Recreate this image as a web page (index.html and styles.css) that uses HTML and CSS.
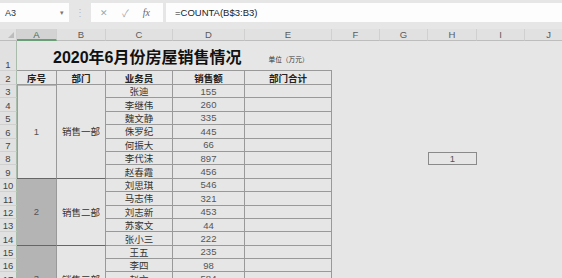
FILE: index.html
```html
<!DOCTYPE html>
<html lang="zh-CN">
<head>
    <meta charset="UTF-8">
    <title>2020年6月份房屋销售情况</title>
    <link rel="stylesheet" href="styles.css">
</head>
<body>

<div class="fbar">
    <div class="namebox"><span>A3</span><span class="arrow">&#9662;</span></div>
    <div class="dots">&#8942;</div>
    <div class="btns"><span class="x">&#10005;</span><span class="ok">&#10003;</span><span class="fx">fx</span></div>
    <div class="formula">=COUNTA(B$3:B3)</div>
</div>

<div class="sheet">
    <!-- column headers -->
    <div class="ch corner"><span class="tri"></span></div>
    <div class="ch on">A</div>
    <div class="ch">B</div>
    <div class="ch">C</div>
    <div class="ch">D</div>
    <div class="ch">E</div>
    <div class="ch">F</div>
    <div class="ch">G</div>
    <div class="ch">H</div>
    <div class="ch">I</div>
    <div class="ch">J</div>

    <!-- row 1 -->
    <div class="rh">1</div>
    <div class="title"><span class="big">2020年6月份房屋销售情况</span><span class="unit">单位（万元）</span></div>

    <!-- row 2 -->
    <div class="rh">2</div>
    <div class="c head">序号</div>
    <div class="c head">部门</div>
    <div class="c head">业务员</div>
    <div class="c head">销售额</div>
    <div class="c head">部门合计</div>

    <div class="rh">3</div>
    <div class="c m7 grp sel num">1</div>
    <div class="c m7 grp">销售一部</div>
    <div class="c">张迪</div>
    <div class="c num">155</div>
    <div class="c"></div>

    <div class="rh">4</div>
    <div class="c">李继伟</div>
    <div class="c num">260</div>
    <div class="c"></div>

    <div class="rh">5</div>
    <div class="c">魏文静</div>
    <div class="c num">335</div>
    <div class="c"></div>

    <div class="rh">6</div>
    <div class="c">侏罗纪</div>
    <div class="c num">445</div>
    <div class="c"></div>

    <div class="rh">7</div>
    <div class="c">何振大</div>
    <div class="c num">66</div>
    <div class="c"></div>

    <div class="rh">8</div>
    <div class="c">李代沫</div>
    <div class="c num">897</div>
    <div class="c"></div>

    <div class="rh">9</div>
    <div class="c">赵春霞</div>
    <div class="c num">456</div>
    <div class="c"></div>

    <div class="rh">10</div>
    <div class="c m5 grp dark num">2</div>
    <div class="c m5 grp">销售二部</div>
    <div class="c">刘思琪</div>
    <div class="c num">546</div>
    <div class="c"></div>

    <div class="rh">11</div>
    <div class="c">马志伟</div>
    <div class="c num">321</div>
    <div class="c"></div>

    <div class="rh">12</div>
    <div class="c">刘志新</div>
    <div class="c num">453</div>
    <div class="c"></div>

    <div class="rh">13</div>
    <div class="c">苏家文</div>
    <div class="c num">44</div>
    <div class="c"></div>

    <div class="rh">14</div>
    <div class="c">张小三</div>
    <div class="c num">222</div>
    <div class="c"></div>

    <div class="rh">15</div>
    <div class="c m5 grp dark num">3</div>
    <div class="c m5 grp">销售三部</div>
    <div class="c">王五</div>
    <div class="c num">235</div>
    <div class="c"></div>

    <div class="rh">16</div>
    <div class="c">李四</div>
    <div class="c num">98</div>
    <div class="c"></div>

    <div class="rh">17</div>
    <div class="c">赵六</div>
    <div class="c num">584</div>
    <div class="c"></div>

    <div class="rh">18</div>
    <div class="c">钱七</div>
    <div class="c num">310</div>
    <div class="c"></div>

    <div class="rh">19</div>
    <div class="c">孙八</div>
    <div class="c num">127</div>
    <div class="c"></div>

    <!-- H8 -->
    <div class="box num">1</div>
</div>

</body>
</html>
```

FILE: styles.css
```css
/* Basic sheet look */
body {
    margin: 0;
    width: 562px;
    height: 278px;
    overflow: hidden;
    background: #e6e6e6;
    font-family: "Liberation Sans", "Noto Sans CJK SC", sans-serif;
    color: #333;
}

/* formula bar */
.fbar {
    display: flex;
    height: 29px;
    padding: 3px 0 7px;
    box-sizing: border-box;
}
.namebox {
    width: 69px;
    background: #fdfdfd;
    display: flex;
    align-items: center;
    justify-content: space-between;
    padding: 0 5px;
    box-sizing: border-box;
    font-size: 9px;
    color: #333;
}
.arrow {
    font-size: 7px;
    color: #777;
}
.dots {
    width: 22px;
    display: flex;
    align-items: center;
    justify-content: center;
    color: #b8b8b8;
    font-size: 10px;
}
.btns {
    width: 72px;
    background: #fdfdfd;
    display: flex;
    align-items: center;
    gap: 14px;
    padding-left: 9px;
    box-sizing: border-box;
    color: #a5a5a5;
    font-size: 9px;
}
.ok {
    font-size: 10px;
}
.fx {
    font-family: "Liberation Serif", serif;
    font-style: italic;
    font-size: 10px;
    color: #666;
}
.formula {
    flex: 1;
    margin-left: 3px;
    background: #fdfdfd;
    display: flex;
    align-items: center;
    padding-left: 9px;
    font-size: 9.5px;
    color: #222;
}

/* grid */
.sheet {
    display: grid;
    grid-template-columns: 17px 40px 49px 67px 72px 87px 48px 48px 49px 48px 48px;
    grid-template-rows: 12px 30px 14px repeat(17, 13.4px);
    font-size: 9.5px;
}
.sheet > div {
    display: flex;
    align-items: center;
    justify-content: center;
    box-sizing: border-box;
    overflow: hidden;
    white-space: nowrap;
}
.ch {
    background: #e1e1e1;
    border-right: 1px solid #d0d0d0;
    border-bottom: 1px solid #bdbdbd;
    color: #5a5a5a;
}
.sheet > .ch.on {
    background: #d3d3d3;
    border-bottom: 2px solid #6a9e76;
    color: #3e6e4c;
}
.sheet > .corner {
    align-items: flex-end;
    justify-content: flex-end;
    padding: 0 2px 2px 0;
}
.tri {
    width: 0;
    height: 0;
    border-left: 6px solid transparent;
    border-bottom: 6px solid #bcbcbc;
}
.sheet > .rh {
    grid-column: 1;
    background: #e1e1e1;
    border-right: 1px solid #a9bcab;
    border-bottom: 1px solid #d0d0d0;
    align-items: flex-end;
    color: #444;
}

.sheet > .title {
    grid-column: span 5;
    justify-content: flex-start;
    padding-left: 36px;
    border-bottom: 1px solid #999;
}
.big {
    font-size: 16px;
    font-weight: bold;
    color: #111;
}
.unit {
    margin: 7px 0 0 27px;
    font-size: 6.7px;
    color: #333;
}

.c {
    border-right: 1px solid #999;
    border-bottom: 1px solid #999;
    color: #333;
}
.head {
    font-weight: bold;
    color: #222;
}
.num {
    color: #555;
}
.m7 {
    grid-row: span 7;
}
.m5 {
    grid-row: span 5;
}
.grp {
    border-bottom-color: #666;
}
.dark {
    background: #b4b4b4;
}
.sel {
    box-shadow: inset 1px 0 0 #86ab8e, inset 0 1px 0 #a7bfa9;
}
.box {
    grid-column: 9;
    grid-row: 9;
    border: 1px solid #8a8a8a;
}
```
